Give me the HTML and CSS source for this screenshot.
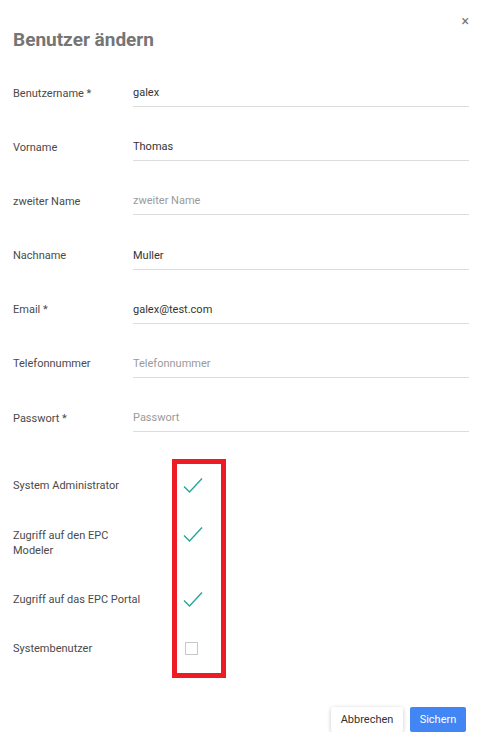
FILE: index.html
```html
<!DOCTYPE html>
<html lang="de">
<head>
<meta charset="utf-8">
<title>Benutzer ändern</title>
<link rel="stylesheet" href="styles.css">
</head>
<body>
<div class="dialog">
  <button class="close" type="button">×</button>
  <h1 class="title">Benutzer ändern</h1>
  <form class="form">
    <div class="row"><label class="label">Benutzername *</label><input class="input" value="galex"></div>
    <div class="row"><label class="label">Vorname</label><input class="input" value="Thomas"></div>
    <div class="row"><label class="label">zweiter Name</label><input class="input" placeholder="zweiter Name"></div>
    <div class="row"><label class="label">Nachname</label><input class="input" value="Muller"></div>
    <div class="row"><label class="label">Email *</label><input class="input" value="galex@test.com"></div>
    <div class="row"><label class="label">Telefonnummer</label><input class="input" placeholder="Telefonnummer"></div>
    <div class="row"><label class="label">Passwort *</label><input class="input" placeholder="Passwort"></div>

    <div class="checks">
      <div class="crow">
        <span class="clabel">System Administrator</span>
        <svg class="tick" width="20" height="17" viewBox="0 0 20 17"><path d="M1 9.5 L6.5 15 L19 1.5" fill="none" stroke="#26a69a" stroke-width="1.4"/></svg>
      </div>
      <div class="crow">
        <span class="clabel">Zugriff auf den EPC<br>Modeler</span>
        <svg class="tick tick-up" width="20" height="17" viewBox="0 0 20 17"><path d="M1 9.5 L6.5 15 L19 1.5" fill="none" stroke="#26a69a" stroke-width="1.4"/></svg>
      </div>
      <div class="crow">
        <span class="clabel">Zugriff auf das EPC Portal</span>
        <svg class="tick" width="20" height="17" viewBox="0 0 20 17"><path d="M1 9.5 L6.5 15 L19 1.5" fill="none" stroke="#26a69a" stroke-width="1.4"/></svg>
      </div>
      <div class="crow crow-last">
        <span class="clabel">Systembenutzer</span>
        <span class="box"></span>
      </div>
      <div class="highlight"></div>
    </div>

    <div class="actions">
      <button class="btn btn-cancel" type="button">Abbrechen</button>
      <button class="btn btn-save" type="button">Sichern</button>
    </div>
  </form>
</div>
</body>
</html>
```
FILE: styles.css
```css
html, body {
  margin: 0;
  padding: 0;
  background: #fff;
}
body {
  font-family: Roboto, "Liberation Sans", Arial, sans-serif;
  font-size: 11px;
  color: #333;
}
.dialog {
  position: relative;
  padding: 28px 14px 0 13px;
}
.close {
  position: absolute;
  top: 13px;
  right: 14px;
  border: none;
  background: none;
  padding: 0;
  font-family: Roboto, sans-serif;
  font-size: 14px;
  line-height: 16px;
  color: #777;
  cursor: pointer;
}
.title {
  margin: 0;
  font-size: 19px;
  line-height: 24px;
  font-weight: 700;
  color: #757575;
}
.form {
  margin-top: 27px;
}
.row {
  display: flex;
  align-items: center;
  height: 28px;
  margin-bottom: 26.2px;
}
.row:nth-child(7) {
  margin-bottom: 27px;
}
.label {
  width: 120px;
  flex: none;
  color: #4a4a4a;
}
.input {
  flex: 1;
  min-width: 0;
  height: 28px;
  box-sizing: border-box;
  border: none;
  border-bottom: 1px solid #ddd;
  padding: 0;
  font-family: Roboto, "Liberation Sans", Arial, sans-serif;
  font-size: 11px;
  color: #333;
  background: transparent;
  outline: none;
}
.input::placeholder {
  color: #9a9a9a;
}
.checks {
  position: relative;
  padding: 19px 0 22px;
  display: flex;
  flex-direction: column;
  gap: 34px;
}
.crow {
  display: flex;
  align-items: flex-start;
}
.crow-last {
  margin-top: -1px;
}
.clabel {
  width: 170px;
  flex: none;
  line-height: 15px;
  color: #4a4a4a;
}
.tick {
  display: block;
  margin-top: -1px;
}
.tick-up {
  margin-top: -2px;
}
.box {
  display: block;
  margin-top: 1px;
  margin-left: 2px;
  width: 13px;
  height: 13px;
  box-sizing: border-box;
  border: 1px solid #c8c8c8;
}
.highlight {
  position: absolute;
  top: 0;
  bottom: 0;
  left: 159px;
  width: 54px;
  box-sizing: border-box;
  border: 5px solid #ed1c24;
}
.actions {
  display: flex;
  justify-content: flex-end;
  gap: 7px;
  margin-top: 29px;
  padding-right: 3px;
}
.btn {
  height: 25px;
  border: none;
  border-radius: 2px;
  font-family: Roboto, "Liberation Sans", Arial, sans-serif;
  font-size: 11px;
  padding: 0 6px;
  cursor: pointer;
}
.btn-cancel {
  width: 72px;
  background: #fff;
  color: #333;
  box-shadow: 0 1px 4px rgba(0, 0, 0, 0.22);
}
.btn-save {
  width: 56px;
  background: #4285f4;
  color: #fff;
}
```
